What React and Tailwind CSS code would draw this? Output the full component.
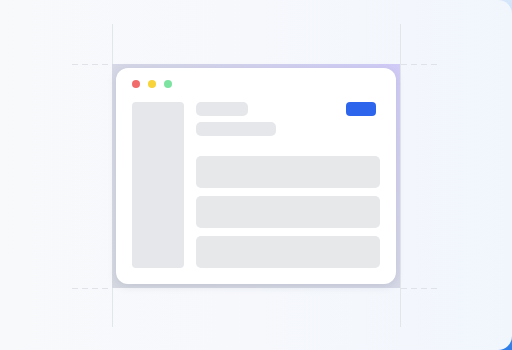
const Guide = ({ className }) => (
  <svg className={`absolute ${className}`} width="40" height="1" viewBox="0 0 40 1">
    <line x1="0" y1="0.5" x2="40" y2="0.5" stroke="#dfe2e8" strokeWidth="1" strokeDasharray="6 4" />
  </svg>
)

const App = () => {
  return (
    <div className="w-[512px] h-[350px] bg-gradient-to-b from-[#d6e6fb] via-[#a9c8f5] to-[#2f7de9]">
      <div className="relative w-full h-full rounded-r-[14px] bg-gradient-to-r from-[#f8f9fb] via-[#f6f8fc] to-[#f1f6fd] flex items-center justify-center overflow-hidden">
        {/* guides */}
        <div className="absolute left-[112px] top-[24px] w-px h-[303px] bg-[#e2e5ea]" />
        <div className="absolute left-[400px] top-[24px] w-px h-[303px] bg-[#e2e5ea]" />
        <Guide className="left-[72px] top-[64px]" />
        <Guide className="left-[401px] top-[64px]" />
        <Guide className="left-[72px] top-[288px]" />
        <Guide className="left-[401px] top-[288px]" />

        <div className="relative mt-[2px] w-[288px] h-[224px] p-1 bg-gradient-to-tr from-[#d6d9e1] via-[#d6d8e6] to-[#d0cbf7]">
          <div className="w-full h-full bg-white rounded-[12px] shadow-[0_2px_8px_rgba(100,110,140,0.18)] pt-3 px-4 pb-4 flex flex-col">
            <div className="flex gap-2 h-2">
              <span className="w-2 h-2 rounded-full bg-[#f26b6b]" />
              <span className="w-2 h-2 rounded-full bg-[#f8d33a]" />
              <span className="w-2 h-2 rounded-full bg-[#7de3a0]" />
            </div>
            <div className="flex gap-3 mt-[14px] flex-1">
              <div className="w-[52px] rounded-[4px] bg-[#e5e7ea]" />
              <div className="flex-1 flex flex-col">
                <div className="flex justify-between">
                  <div className="flex flex-col gap-[6px]">
                    <div className="w-[52px] h-[14px] rounded-[5px] bg-[#e5e7ea]" />
                    <div className="w-[80px] h-[14px] rounded-[5px] bg-[#e5e7ea]" />
                  </div>
                  <div className="w-[30px] h-[14px] mr-1 rounded-[4px] bg-[#2d65ec]" />
                </div>
                <div className="flex flex-col gap-2 mt-5">
                  <div className="h-8 rounded-[5px] bg-[#e6e8ea]" />
                  <div className="h-8 rounded-[5px] bg-[#e6e8ea]" />
                  <div className="h-8 rounded-[5px] bg-[#e6e8ea]" />
                </div>
              </div>
            </div>
          </div>
        </div>
      </div>
    </div>
  )
}

export default App
